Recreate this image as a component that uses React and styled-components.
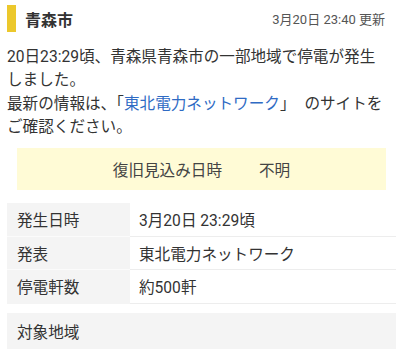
import React from "react";
import styled, { createGlobalStyle } from "styled-components";

const GlobalStyle = createGlobalStyle`
  html, body {
    margin: 0;
    padding: 0;
    background: #fff;
  }
  body {
    font-family: Roboto, "Noto Sans CJK JP", sans-serif;
    color: #333;
    -webkit-font-smoothing: antialiased;
  }
`;

const Page = styled.div`
  width: 396px;
  overflow: hidden;
`;

const Header = styled.div`
  display: flex;
  align-items: center;
  justify-content: space-between;
  padding: 5px 11px 0 7px;
  height: 27px;
`;

const TitleWrap = styled.div`
  display: flex;
  align-items: center;
  height: 100%;
`;

const Bar = styled.span`
  width: 9px;
  height: 27px;
  background: #ecc82c;
  margin-right: 9px;
`;

const Title = styled.h1`
  margin: 0;
  font-size: 16px;
  font-weight: bold;
  color: #333;
`;

const Updated = styled.span`
  font-size: 13px;
  color: #555;
`;

const Message = styled.p`
  margin: 14px 8px 0 7px;
  font-size: 15.6px;
  line-height: 23.3px;
`;

const Link = styled.a`
  color: #2f6bc4;
  text-decoration: none;
`;

const Close = styled.span`
  margin-right: 5px;
`;

const Restore = styled.div`
  display: flex;
  justify-content: center;
  align-items: center;
  gap: 37px;
  margin: 9px 10px 0 17px;
  height: 42px;
  background: #fffbd6;
  font-size: 15.6px;
  color: #444;
`;

const Table = styled.div`
  margin: 13px 0 0 7px;
`;

const Row = styled.div`
  display: grid;
  grid-template-columns: 123px 1fr;
  height: 33.5px;
  font-size: 15.6px;
`;

const Label = styled.div`
  display: flex;
  align-items: center;
  padding-left: 10px;
  background: #f4f4f4;
  border-bottom: 1px solid ${(p) => (p.$last ? "#f4f4f4" : "#fbfbfb")};
`;

const Value = styled.div`
  display: flex;
  align-items: center;
  padding-left: 9px;
  border-bottom: 1px solid #ededed;
`;

const Area = styled.div`
  margin: 9px 0 0 7px;
  padding: 9px 10px 12px;
  background: #f4f4f4;
  font-size: 15.6px;
  line-height: 23px;
`;

const rows = [
  ["発生日時", "3月20日 23:29頃"],
  ["発表", "東北電力ネットワーク"],
  ["停電軒数", "約500軒"],
];

const App = () => {
  return (
    <Page>
      <GlobalStyle />
      <Header>
        <TitleWrap>
          <Bar />
          <Title>青森市</Title>
        </TitleWrap>
        <Updated>3月20日 23:40 更新</Updated>
      </Header>

      <Message>
        20日23:29頃、青森県青森市の一部地域で停電が発生しました。
        <br />
        最新の情報は、「<Link href="#">東北電力ネットワーク</Link><Close>」</Close> のサイトをご確認ください。
      </Message>

      <Restore>
        <span>復旧見込み日時</span>
        <span>不明</span>
      </Restore>

      <Table>
        {rows.map(([label, value], i) => (
          <Row key={label}>
            <Label $last={i === rows.length - 1}>{label}</Label>
            <Value>{value}</Value>
          </Row>
        ))}
      </Table>

      <Area>対象地域</Area>
    </Page>
  );
};

export default App;
